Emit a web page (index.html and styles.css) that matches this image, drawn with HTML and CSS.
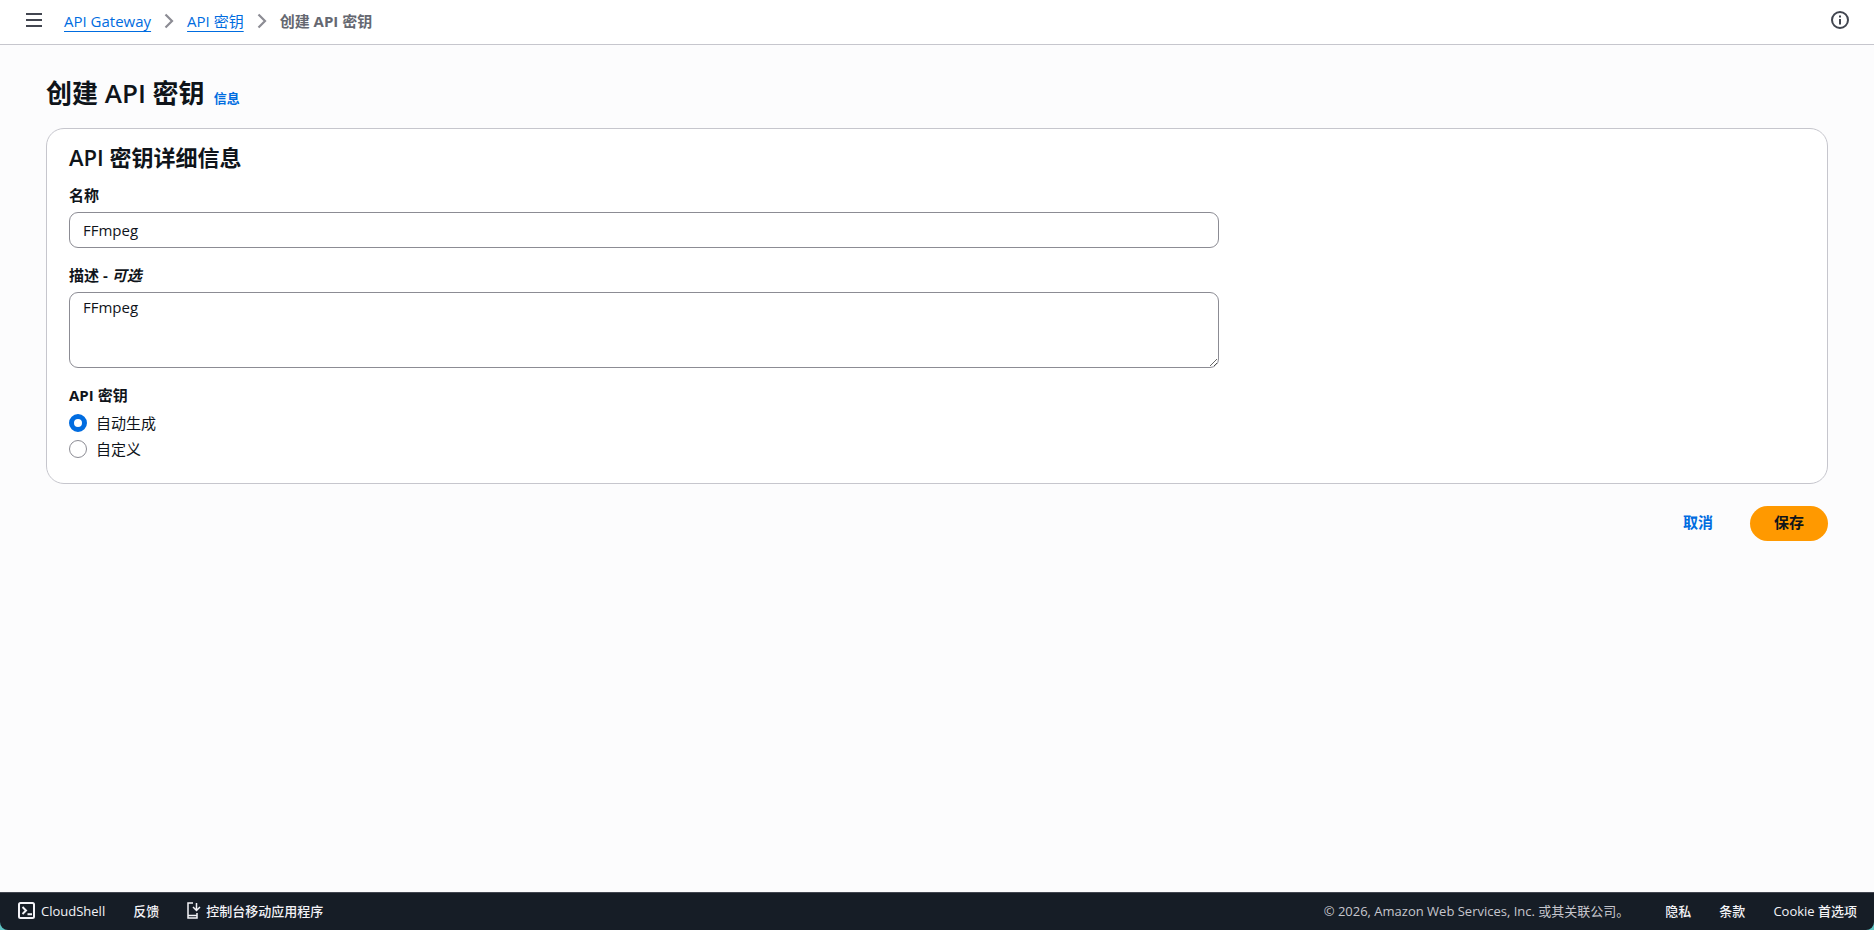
FILE: index.html
```html
<!DOCTYPE html>
<html lang="zh-CN">
<head>
    <meta charset="UTF-8">
    <meta name="viewport" content="width=device-width, initial-scale=1.0">
    <title>创建 API 密钥</title>
    <link rel="stylesheet" href="styles.css">
</head>
<body>
    <!-- Top bar -->
    <header class="topbar">
        <button class="icon-button" type="button" aria-label="菜单">
            <svg width="16" height="16" viewBox="0 0 16 16"><path d="M0 2h16M0 8h16M0 14h16" stroke="#424650" stroke-width="2"/></svg>
        </button>
        <nav class="breadcrumbs">
            <a href="#">API Gateway</a>
            <svg width="10" height="16" viewBox="0 0 10 16"><path d="M1.5 1.5L8 8l-6.5 6.5" fill="none" stroke="#8c8c94" stroke-width="2.2"/></svg>
            <a href="#">API 密钥</a>
            <svg width="10" height="16" viewBox="0 0 10 16"><path d="M1.5 1.5L8 8l-6.5 6.5" fill="none" stroke="#8c8c94" stroke-width="2.2"/></svg>
            <span class="current">创建 API 密钥</span>
        </nav>
        <button class="icon-button" type="button" aria-label="信息">
            <svg width="18" height="18" viewBox="0 0 18 18"><circle cx="9" cy="9" r="8" fill="none" stroke="#424650" stroke-width="2"/><path d="M9 4.5v2M9 8v5.5" stroke="#424650" stroke-width="2"/></svg>
        </button>
    </header>

    <!-- Create key form -->
    <main class="content">
        <div class="page-title">
            <h1>创建 API 密钥</h1>
            <a href="#">信息</a>
        </div>
        <form id="key-form" class="card">
            <h2>API 密钥详细信息</h2>
            <div class="fields">
                <div class="field">
                    <label for="name">名称</label>
                    <input id="name" class="text-input" type="text" value="FFmpeg">
                </div>
                <div class="field">
                    <label for="description">描述 - <i>可选</i></label>
                    <textarea id="description" class="text-input" rows="3" spellcheck="false">FFmpeg</textarea>
                </div>
                <fieldset class="field">
                    <legend>API 密钥</legend>
                    <div class="radios">
                        <label class="radio"><input type="radio" name="mode" checked>自动生成</label>
                        <label class="radio"><input type="radio" name="mode">自定义</label>
                    </div>
                </fieldset>
            </div>
        </form>
        <div class="actions">
            <button class="button link" type="button">取消</button>
            <button class="button primary" type="submit" form="key-form">保存</button>
        </div>
    </main>

    <!-- Footer -->
    <div class="footer-wrap">
        <footer class="footer">
            <a href="#">
                <svg width="17" height="17" viewBox="0 0 17 17"><rect x="1" y="1" width="15" height="15" rx="1.5" fill="none" stroke="currentColor" stroke-width="2"/><path d="M4.5 5L8 8.5 4.5 12M9.5 12.2H14" fill="none" stroke="currentColor" stroke-width="2"/></svg>
                CloudShell
            </a>
            <a href="#">反馈</a>
            <a href="#" class="mobile">
                <svg width="14" height="17" viewBox="0 0 14 17"><path d="M6 1H1v15h9v-5M1 13.5h9" fill="none" stroke="currentColor" stroke-width="1.5"/><path d="M9.5 1v7M6 5l3.5 3.5L13 5" fill="none" stroke="currentColor" stroke-width="1.5"/></svg>
                控制台移动应用程序
            </a>
            <span class="copyright">© 2026, Amazon Web Services, Inc. 或其关联公司。</span>
            <a href="#">隐私</a>
            <a href="#">条款</a>
            <a href="#">Cookie 首选项</a>
        </footer>
    </div>
</body>
</html>
```

FILE: styles.css
```css
* {
    box-sizing: border-box;
}
body {
    margin: 0;
    min-height: 100vh;
    display: flex;
    flex-direction: column;
    background: #fcfcfd;
    color: #0f141a;
    font-family: "Open Sans", "Noto Sans CJK SC", sans-serif;
    font-size: 15px;
    line-height: 22px;
}
a {
    color: #006ce0;
    text-decoration: none;
}
button, input, textarea {
    font: inherit;
    color: inherit;
}
svg {
    display: block;
    flex: none;
}

/* Top bar */
.topbar {
    display: flex;
    align-items: center;
    height: 45px;
    padding: 0 25px 4px 26px;
    background: #fff;
    border-bottom: 1px solid #c6c6cd;
}
.icon-button {
    padding: 0;
    border: none;
    background: none;
    cursor: pointer;
}
.breadcrumbs {
    display: flex;
    flex: 1;
    align-items: center;
    gap: 13px;
    margin: 2px 0 0 22px;
}
.breadcrumbs a {
    text-decoration: underline;
    text-underline-offset: 4px;
    text-decoration-thickness: 1px;
}
.current {
    color: #656871;
    font-weight: 700;
}

/* Content */
.content {
    flex: 1;
    padding: 32px 46px;
}
.page-title {
    display: flex;
    align-items: baseline;
    gap: 9px;
    margin-bottom: 18px;
}
.page-title a {
    font-size: 13px;
    font-weight: 700;
}
h1, h2 {
    margin: 0;
    font-weight: 600;
}
h1 {
    font-size: 26px;
    line-height: 33px;
}
h2 {
    font-size: 22px;
    line-height: 26px;
}
.card {
    padding: 15px 22px 23px;
    background: #fff;
    border: 1px solid #c6c6cd;
    border-radius: 18px;
}
.fields {
    display: grid;
    grid-template-columns: repeat(3, 1fr);
    gap: 16px 22px;
    margin-top: 14px;
}
.field {
    grid-column: span 2;
    display: flex;
    flex-direction: column;
    margin: 0;
    padding: 0;
    border: none;
    gap: 6px;
}
.field > label, legend {
    padding: 0;
    font-weight: 700;
}
.text-input {
    display: block;
    width: 100%;
    padding: 5px 13px;
    background: #fff;
    border: 1px solid #8c8c94;
    border-radius: 9px;
}
input.text-input {
    height: 36px;
}
textarea.text-input {
    height: 76px;
    padding: 3px 13px;
    resize: vertical;
}
.radios {
    display: flex;
    flex-direction: column;
    align-items: flex-start;
    gap: 4px;
    margin-top: 6px;
}
.radio {
    display: flex;
    align-items: center;
    gap: 9px;
}
.radio input {
    appearance: none;
    width: 18px;
    height: 18px;
    margin: 0;
    background: #fff;
    border: 1px solid #8c8c94;
    border-radius: 50%;
}
.radio input:checked {
    border: 5px solid #006ce0;
}
.actions {
    display: flex;
    justify-content: flex-end;
    gap: 13px;
    margin-top: 22px;
}
.button {
    padding: 5px 24px 7px;
    border: none;
    border-radius: 18px;
    font-weight: 700;
    line-height: 23px;
    cursor: pointer;
}
.link {
    background: none;
    color: #006ce0;
}
.primary {
    background: #ff9900;
}

/* Footer */
.footer-wrap {
    background: #5fc4c4;
    border-top: 1px solid #424650;
}
.footer {
    display: flex;
    align-items: center;
    gap: 28px;
    height: 37px;
    padding: 0 17px 2px 18px;
    background: #161d26;
    border-radius: 0 0 8px 8px;
    font-size: 13px;
    font-weight: 500;
}
.footer a {
    display: flex;
    align-items: center;
    gap: 6px;
    color: #f3f3f7;
}
.footer .mobile {
    gap: 5px;
}
.copyright {
    margin-left: auto;
    margin-right: 8px;
    color: #c6c6cd;
    font-weight: 400;
}
```
